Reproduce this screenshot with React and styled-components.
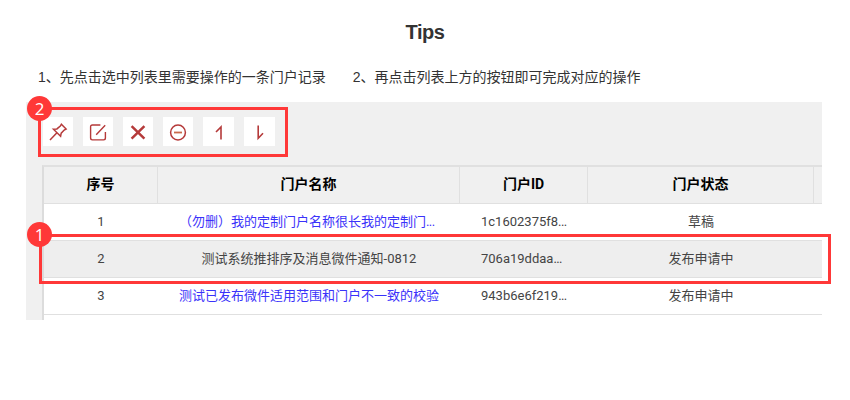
import React from "react";
import styled, { createGlobalStyle } from "styled-components";

const GlobalStyle = createGlobalStyle`
  * { box-sizing: border-box; }
  body {
    margin: 0;
    background: #fff;
    color: #333;
    font-family: "Liberation Sans", "Noto Sans CJK SC", sans-serif;
  }
`;

const Page = styled.main`
  width: 850px;
  height: 400px;
  overflow: hidden;
`;

const Title = styled.h1`
  margin: 0;
  padding-top: 20px;
  font-size: 20px;
  line-height: 24px;
  font-weight: 700;
  text-align: center;
  letter-spacing: -0.4px;
`;

const Steps = styled.div`
  display: flex;
  gap: 27px;
  height: 58px;
  padding: 23px 0 0 38px;
  font-size: 14px;
  line-height: 20px;
  white-space: nowrap;
`;

const Panel = styled.section`
  position: relative;
  width: 796px;
  height: 218px;
  margin-left: 26px;
  padding: 15px 0 0 16px;
  background: #f0f0f0;
`;

const Toolbar = styled.div`
  display: flex;
  gap: 10px;
  height: 48px;
  padding-left: 1px;
`;

const ToolButton = styled.button`
  display: flex;
  align-items: center;
  justify-content: center;
  width: ${(p) => (p.$wide ? 31 : 30)}px;
  height: 29px;
  padding: 0;
  border: 0;
  background: #fff;
  color: #b53a3a;
`;

const Table = styled.div`
  height: 155px;
  border-top: 2px solid #e0e0e0;
  border-left: 2px solid #dcdcdc;
  background: #fff;
  font-family: Roboto, "Noto Sans CJK SC", sans-serif;
  font-size: 13px;
`;

const Row = styled.div`
  display: grid;
  grid-template-columns: 114px 302px 128px 226px 8px;
  height: 37px;
  border-bottom: 1px solid #e0e0e0;
  background: ${(p) => (p.$header ? "#f0f0f0" : p.$selected ? "#eee" : "#fff")};
  color: ${(p) => (p.$header ? "#000" : "#444")};
  font-size: ${(p) => (p.$header ? 14 : 13)}px;
  font-weight: ${(p) => (p.$header ? 700 : 400)};
`;

const Cell = styled.div`
  display: flex;
  align-items: center;
  justify-content: center;
  padding-bottom: ${(p) => (p.$latin ? 1 : 4)}px;
  border-right: ${(p) => (p.$divided ? "1px solid #e0e0e0" : "0")};
  color: ${(p) => (p.$link ? "#3a32fa" : "inherit")};
  white-space: nowrap;
`;

const Clipped = styled.span`
  width: ${(p) => p.$w}px;
`;

const Dots = styled.span`
  letter-spacing: -0.6px;
`;

const Highlight = styled.div`
  position: absolute;
  left: ${(p) => p.$x}px;
  top: ${(p) => p.$y}px;
  width: ${(p) => p.$w}px;
  height: 50px;
  border: 3px solid #ff3838;
`;

const Badge = styled.span`
  position: absolute;
  left: 1px;
  top: ${(p) => p.$y}px;
  display: flex;
  align-items: center;
  justify-content: center;
  width: 25px;
  height: 25px;
  border-radius: 50%;
  background: #ff3838;
  color: #fff;
  font: 17px/25px "Open Sans", sans-serif;
`;

const Icon = ({ width = 1.3, children }) => (
  <svg width="20" height="20" viewBox="0 0 20 20" fill="none" stroke="currentColor" strokeWidth={width}>
    {children}
  </svg>
);

const tools = [
  {
    name: "置顶",
    icon: (
      <Icon width={1.5}>
        <path d="M13.4 2.2 18.1 7 16.2 8 13.2 11.2 12.6 14.3 5.4 7.2 8.9 6.9 12.3 4.1ZM8.7 10.9 2 18.1" />
      </Icon>
    ),
  },
  {
    name: "编辑",
    icon: (
      <Icon width={1.4}>
        <path d="M12.4 3H4.4Q2.6 3 2.6 4.8V16.1Q2.6 17.9 4.4 17.9H15.6Q17.4 17.9 17.4 16.1V10M8.2 12.8 17.2 3.2" />
      </Icon>
    ),
  },
  {
    name: "删除",
    icon: (
      <Icon width={2.5}>
        <path d="M3.6 4.2 16.4 16.6M16.4 4.2 3.6 16.6" />
      </Icon>
    ),
  },
  {
    name: "停用",
    icon: (
      <Icon width={1.5}>
        <circle cx="10" cy="10.5" r="7.4" />
        <path d="M6 10.5H14" stroke="#c96a4c" strokeWidth="1.8" />
      </Icon>
    ),
  },
  {
    name: "上移",
    wide: true,
    icon: (
      <Icon width={1.6}>
        <path d="M12 17.6V5L7 10" />
      </Icon>
    ),
  },
  {
    name: "下移",
    wide: true,
    icon: (
      <Icon width={1.6}>
        <path d="M8.2 3.5V16.2L13 11.2" />
      </Icon>
    ),
  },
];

const rows = [
  { no: "1", name: "（勿删）我的定制门户名称很长我的定制门", clipped: true, id: "1c1602375f8", status: "草稿", link: true },
  { no: "2", name: "测试系统推排序及消息微件通知-0812", id: "706a19ddaa", status: "发布申请中", selected: true },
  { no: "3", name: "测试已发布微件适用范围和门户不一致的校验", id: "943b6e6f219", status: "发布申请中", link: true },
];

export default function App() {
  return (
    <Page>
      <GlobalStyle />
      <Title>Tips</Title>
      <Steps>
        <span>1、先点击选中列表里需要操作的一条门户记录</span>
        <span>2、再点击列表上方的按钮即可完成对应的操作</span>
      </Steps>
      <Panel>
        <Toolbar>
          {tools.map((tool) => (
            <ToolButton key={tool.name} $wide={tool.wide} aria-label={tool.name}>
              {tool.icon}
            </ToolButton>
          ))}
        </Toolbar>
        <Table>
          <Row $header>
            {["序号", "门户名称", "门户ID", "门户状态"].map((label) => (
              <Cell key={label} $divided>{label}</Cell>
            ))}
          </Row>
          {rows.map((row) => (
            <Row key={row.no} $selected={row.selected}>
              <Cell $latin>{row.no}</Cell>
              <Cell $link={row.link}>
                {row.clipped ? <Clipped $w={260}>{row.name}<Dots>...</Dots></Clipped> : row.name}
              </Cell>
              <Cell $latin>
                <Clipped $w={86}>{row.id}<Dots>...</Dots></Clipped>
              </Cell>
              <Cell>{row.status}</Cell>
            </Row>
          ))}
        </Table>
        <Highlight $x={12} $y={5} $w={250} />
        <Highlight $x={13} $y={132} $w={792} />
        <Badge $y={-6}>2</Badge>
        <Badge $y={120}>1</Badge>
      </Panel>
    </Page>
  );
}
